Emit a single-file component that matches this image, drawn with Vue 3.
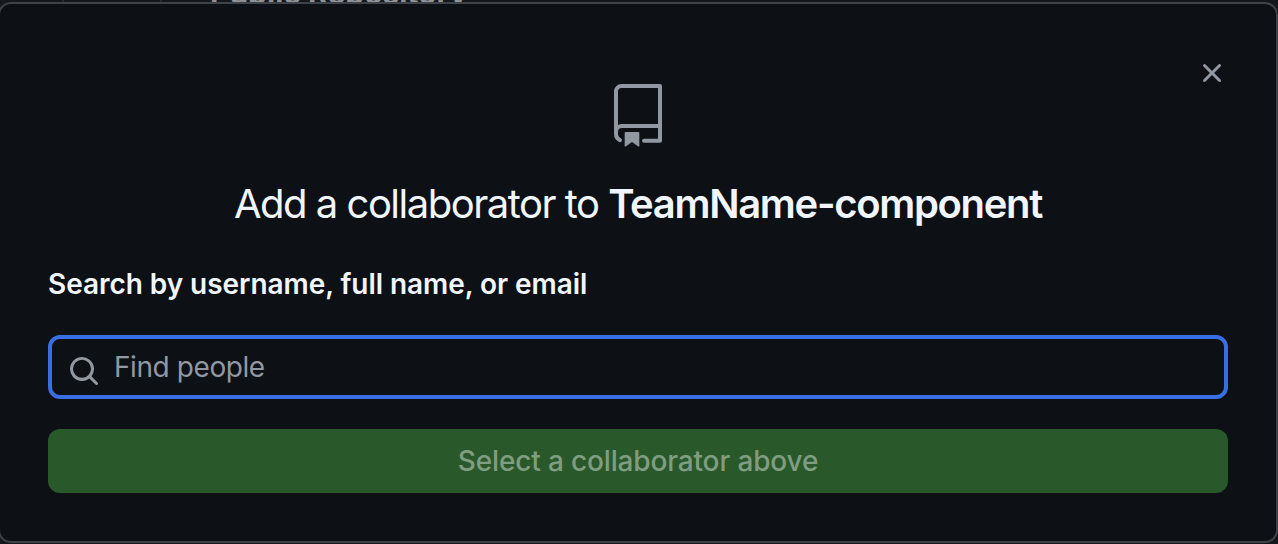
<script setup>
const repo = 'TeamName-component'
</script>

<template>
  <div class="page">
    <div class="behind" aria-hidden="true"><i></i><i></i><span>Public Repository</span></div>
    <section class="dialog">
      <button class="close" aria-label="Close">
        <svg width="32" height="32" viewBox="0 0 16 16"><path d="M3.72 3.72a.75.75 0 0 1 1.06 0L8 6.94l3.22-3.22a.749.749 0 0 1 1.275.326.749.749 0 0 1-.215.734L9.06 8l3.22 3.22a.749.749 0 0 1-.326 1.275.749.749 0 0 1-.734-.215L8 9.06l-3.22 3.22a.751.751 0 0 1-1.042-.018.751.751 0 0 1-.018-1.042L6.94 8 3.72 4.78a.75.75 0 0 1 0-1.06Z" /></svg>
      </button>
      <svg class="repo" width="64" height="64" viewBox="0 0 24 24">
        <path d="M3 2.75A2.75 2.75 0 0 1 5.75 0h14.5a.75.75 0 0 1 .75.75v20.5a.75.75 0 0 1-.75.75h-6a.75.75 0 0 1 0-1.5h5.25v-4H6A1.5 1.5 0 0 0 4.5 18v.75c0 .716.43 1.334 1.05 1.605a.75.75 0 0 1-.6 1.374A3.251 3.251 0 0 1 3 18.75ZM19.5 1.5H5.75c-.69 0-1.25.56-1.25 1.25v12.651A2.989 2.989 0 0 1 6 15h13.5Z" />
        <path d="M7 18.25a.25.25 0 0 1 .25-.25h5a.25.25 0 0 1 .25.25v5.01a.25.25 0 0 1-.397.201l-2.206-1.604a.25.25 0 0 0-.294 0L7.397 23.46a.25.25 0 0 1-.397-.2Z" />
      </svg>
      <h1><span>Add a collaborator to </span><strong>{{ repo }}</strong></h1>
      <label for="people"><span>Search by username, full name, or email</span></label>
      <div class="field">
        <svg width="32" height="32" viewBox="0 0 16 16"><path d="M10.68 11.74a6 6 0 0 1-7.922-8.982 6 6 0 0 1 8.982 7.922l3.04 3.04a.749.749 0 0 1-.326 1.275.749.749 0 0 1-.734-.215ZM11.5 7a4.499 4.499 0 1 0-8.997 0A4.499 4.499 0 0 0 11.5 7Z" /></svg>
        <input id="people" type="text" placeholder="Find people" />
      </div>
      <button class="submit" disabled><span>Select a collaborator above</span></button>
    </section>
  </div>
</template>

<style>
body { background: #14171b; }
</style>

<style scoped>
* { box-sizing: border-box; }
.page {
  position: relative;
  height: 544px;
  padding-top: 2px;
  overflow: hidden;
  background: #14171b;
  font-family: Inter, "Liberation Sans", sans-serif;
}
.behind { position: absolute; inset: 0 0 auto; height: 2px; overflow: hidden; }
.behind i { position: absolute; top: 0; left: 62px; width: 2px; height: 2px; background: #25292d; }
.behind i + i { left: 160px; }
.behind span {
  position: absolute;
  left: 210px;
  bottom: -9px;
  white-space: nowrap;
  font-size: 30px;
  line-height: 36px;
  font-weight: 700;
  color: #919296;
}
.dialog {
  position: relative;
  display: flex;
  flex-direction: column;
  width: 1280px;
  height: 541px;
  margin-left: -2px;
  padding: 80px 48px 0;
  border: 2px solid #3d4248;
  border-radius: 13px;
  background: #0d1015;
}
svg { display: block; fill: #9198a1; }
.close {
  position: absolute;
  top: 53px;
  right: 48px;
  padding: 0;
  border: 0;
  background: none;
}
.repo { align-self: center; }
h1 {
  margin: 32px 0 0;
  height: 48px;
  line-height: 48px;
  text-align: center;
  white-space: pre;
  font-size: 40px;
  font-weight: 400;
  color: #f0f6fc;
}
h1 span { letter-spacing: -1.5px; }
h1 strong { font-weight: 600; letter-spacing: -1.32px; }
label {
  margin-top: 35px;
  height: 42px;
  line-height: 42px;
  font-size: 28px;
  font-weight: 600;
  letter-spacing: -0.05px;
  color: #f0f6fc;
}
.field {
  display: flex;
  height: 64px;
  margin-top: 30px;
  padding: 0 16px;
  border: 4px solid #386fe3;
  border-radius: 12px;
}
.field svg { flex: none; margin-top: 16px; }
.field input {
  flex: 1;
  min-width: 0;
  height: 56px;
  margin-left: 14px;
  padding: 0;
  border: 0;
  outline: 0;
  background: transparent;
  font-family: inherit;
  font-size: 28px;
  font-weight: 400;
  letter-spacing: -0.42px;
  color: #f0f6fc;
}
.field input::placeholder { color: #9198a1; opacity: 1; }
.submit {
  height: 64px;
  margin-top: 30px;
  padding: 0;
  border: 0;
  border-radius: 12px;
  background: #29582a;
  color: #7f9d80;
  font-family: inherit;
  font-size: 28px;
  font-weight: 500;
  letter-spacing: -0.15px;
}
</style>
